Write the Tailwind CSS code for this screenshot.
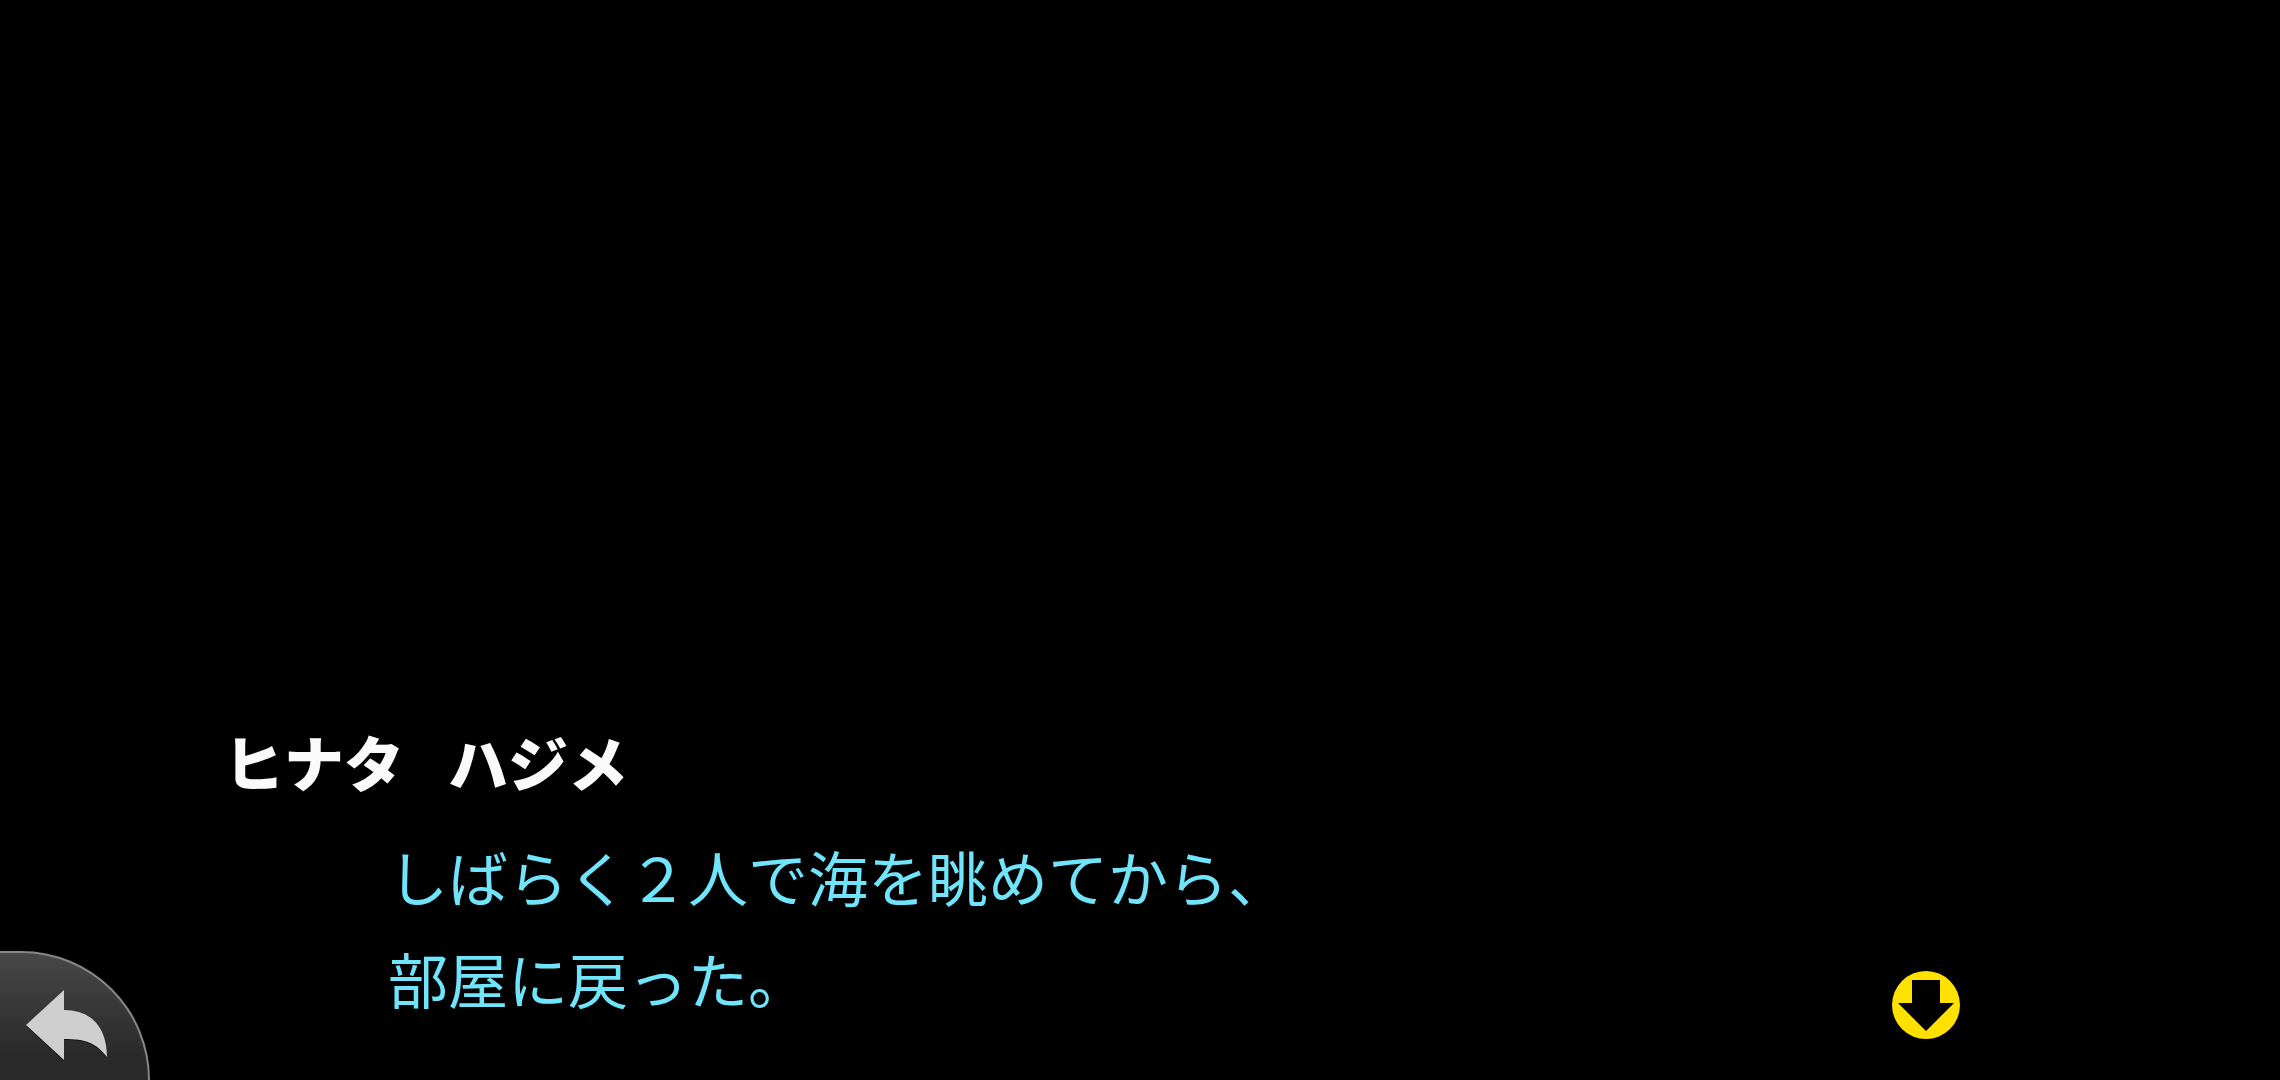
<!DOCTYPE html>
<html lang="ja">
  <head>
    <meta charset="UTF-8" />
    <meta name="viewport" content="width=device-width, initial-scale=1.0" />
    <title>ヒナタ ハジメ</title>
    <script src="https://cdn.jsdelivr.net/npm/@tailwindcss/browser@4"></script>
  </head>
  <body class="bg-black">
    <main
      class="relative flex min-h-screen items-end justify-between overflow-hidden pl-56 pr-80 font-['Noto_Sans_CJK_JP',sans-serif]"
    >
      <!-- Dialogue -->
      <section class="pb-[51px]">
        <h1
          class="mb-6 flex gap-11 text-6xl leading-20 font-black text-neutral-50"
        >
          <span>ヒナタ</span>
          <span>ハジメ</span>
        </h1>
        <p class="pl-41 text-6xl leading-[102px] font-normal text-[#6fe4fb]">
          しばらく２人で海を眺めてから、<br />
          部屋に戻った。
        </p>
      </section>

      <!-- Next -->
      <button type="button" aria-label="次へ" class="mb-[41px] cursor-pointer">
        <svg class="size-17" viewBox="0 0 68 68" aria-hidden="true">
          <circle cx="34" cy="34" r="34" fill="#ffe100" />
          <path d="M20 9H48V32H62L34 60L6 32H20Z" fill="#000" />
        </svg>
      </button>

      <!-- Back -->
      <button
        type="button"
        aria-label="戻る"
        class="absolute bottom-0 left-0 h-[129px] w-[150px] cursor-pointer rounded-tr-[129px] border-t-2 border-r-2 border-[#858789] bg-linear-to-b from-[#484848] to-[#2a2a2a] to-80%"
      >
        <svg class="h-full w-full" viewBox="0 2 148 127" aria-hidden="true">
          <path
            d="M26 75L64 40V60C91 60 107 77 107 107C96 93 86 89 64 89V110Z"
            fill="#111"
          />
          <path
            d="M26 74L64 39V59C91 59 107 76 107 106C96 92 86 88 64 88V109Z"
            fill="#cecece"
          />
        </svg>
      </button>
    </main>
  </body>
</html>
